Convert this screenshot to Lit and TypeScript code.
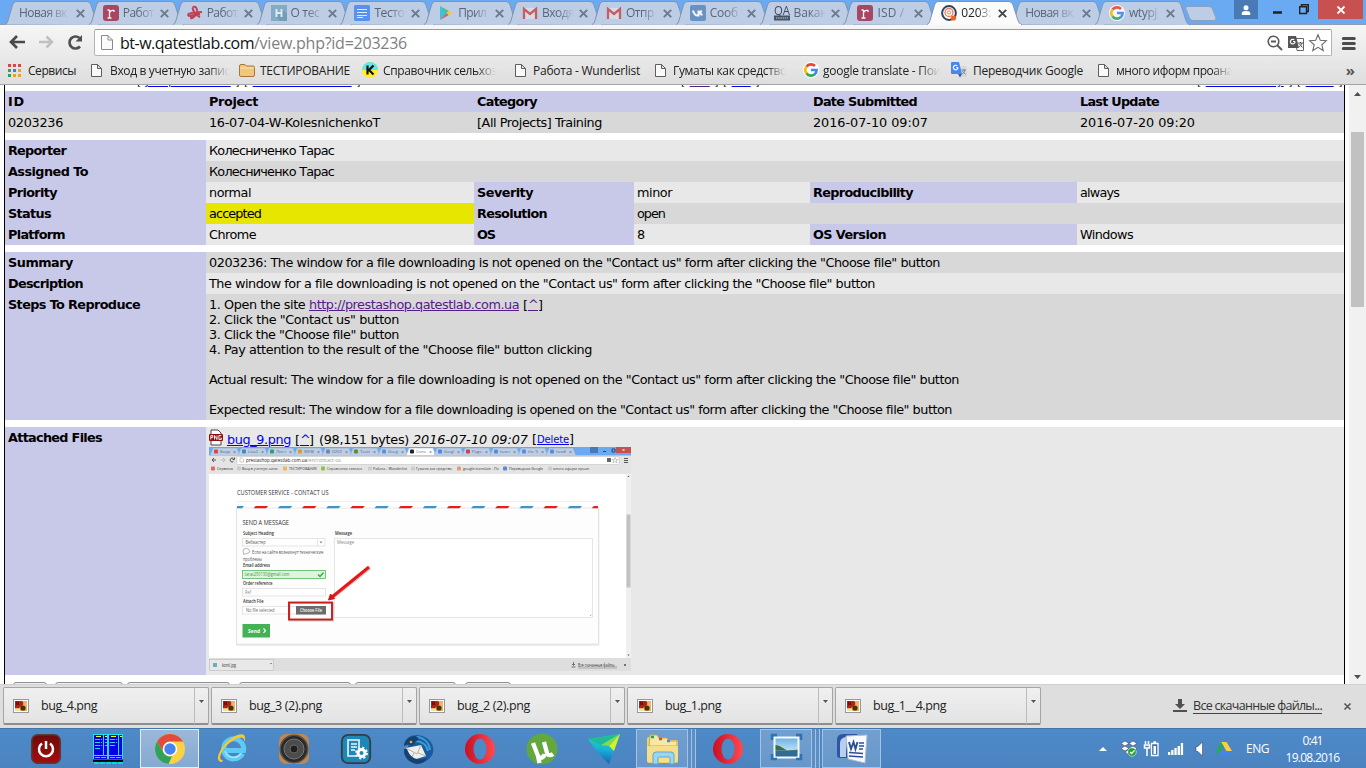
import { LitElement, html, css, svg } from "lit";
import { customElement } from "lit/decorators.js";

// Text whose letter-spacing is adjusted so it takes w pixels.
const fit = (text: string, w: number, cls = "") =>
  html`<span class="fit ${cls}" data-w=${w}>${text}</span>`;
const icon = (w: number, h: number, body: unknown, cls = "") =>
  html`<svg class=${cls} width=${w} height=${h} viewBox="0 0 ${w} ${h}">${body}</svg>`;
const st = (x: number, y: number, w: number, size: number, text: string, fill = "#444", weight = 400) =>
  svg`<text x=${x} y=${y} textLength=${w} lengthAdjust="spacingAndGlyphs" font-size=${size} fill=${fill} font-weight=${weight}>${text}</text>`;

const google = svg`<g fill="none" stroke-width="2.7"><path d="M3.5 4.6A5.6 5.6 0 0 1 12 4" stroke="#ea4335"/><path d="M3.6 4.5a5.6 5.6 0 0 0 0 7" stroke="#fbbc05"/><path d="M3.5 11.4a5.6 5.6 0 0 0 8.2.8" stroke="#34a853"/><path d="M8 8h5.6c0 2-.7 3.4-2 4.4" stroke="#4285f4"/></g>`;
const rIcon = svg`<rect width="16" height="16" rx="3" fill="#a5304a"/><path d="M6.500 13V5M4.500 13h4M4.500 5h2M6.500 8c.3-2 2-3 4.500-2.500v1.500" fill="none" stroke="#fff" stroke-width="1.300"/>`;
const gmail = svg`<path d="M2 3h12v11H2z" fill="#d9dfe9"/><path d="M2 14V4l6 5 6-5v10" fill="none" stroke="#c74b4b" stroke-width="2.300"/>`;
const fav: Record<string, unknown> = {
  r: rIcon,
  gmail,
  google: svg`<circle cx="8" cy="8" r="8" fill="#fff"/>${google}`,
  star: svg`<path d="M1 9.500c1-2 6-2 14-2.500M5.500 2.500c3-2 4.500 0 5 5.500M5.500 2.500C6 6 9 10 13 12M10 8c-2 4-6 6-6 5 0-2 4-4 9-4M1 9.500c0 2 3 1.500 5 .5" fill="none" stroke="#c1293c" stroke-width="2"/>`,
  h: svg`<rect width="16" height="16" fill="#78a7bf"/><path d="M11 4l5 5v7H9l-4-4z" fill="#6794ad"/><path d="M5.500 4v8M10.500 4v8M5 8h6" stroke="#e4eef4" stroke-width="2"/>`,
  docs: svg`<rect width="16" height="16" rx="1.500" fill="#4688f1"/><path d="M3 4.500h10M3 7.500h10M3 10.500h10M3 12.500h6" stroke="#e8f0fe"/>`,
  play: svg`<path d="M2 1l7 7-7 7z" fill="#25c2d8"/><path d="M2 1l9 5-2.500 2.500z" fill="#3dbf7c"/><path d="M2 15l9-5-2.500-2z" fill="#e4495b"/><path d="M11 5.500l4 2.500-4 2.500L8.500 8z" fill="#f4c83a"/>`,
  vk: svg`<rect width="16" height="16" rx="2" fill="#5b88bd"/><path d="M3 5.500c.8 3 2.500 5 4.500 5h1v-5M8.500 8c1.500 0 2.500-1 3-2.500M8.500 8c1.500 0 3 1 3.500 2.500" fill="none" stroke="#fff" stroke-width="2"/>`,
  qa: svg`<rect y="10.500" width="16" height="5" fill="#34404f"/><text x="0" y="9.500" textLength="16" lengthAdjust="spacingAndGlyphs" font-size="12" fill="#2b3644">QA</text><path d="M2 13h12" stroke="#99a" stroke-width="1.500" stroke-dasharray="1.500 .7"/>`,
  mantis: svg`<circle cx="8" cy="8" r="6.900" fill="#fff" stroke="#2c4468" stroke-width="2"/><circle cx="8" cy="7.500" r="4" fill="none" stroke="#f07a4a" stroke-width="1.300"/><circle cx="8" cy="7.500" r="1.600" fill="none" stroke="#f07a4a"/><circle cx="12.500" cy="13" r="2.600" fill="#f4641e"/>`,
};
const tabs: [string, string, number][] = [
  ["", "Новая вк", 48], ["r", "Работ", 31], ["star", "Работ", 31], ["h", "О тес", 29], ["docs", "Тесто", 30],
  ["play", "Прил", 28], ["gmail", "Входя", 32], ["gmail", "Отпр", 28], ["vk", "Сооб", 28], ["qa", "Вакан", 34],
  ["r", "ISD /", 27], ["mantis", "0203:", 30], ["", "Новая вк", 48], ["google", "wtypj", 28],
];
const page = svg`<path d="M.5.500h6l4 4v8H.500zM6.500.500v4h4" fill="#fafafa" stroke="#5e5e5e"/>`;
const bIcons: Record<string, unknown> = {
  apps: icon(13, 13, ["#e0443e", "#e0443e", "#e0443e", "#34a05c", "#3a7ce0", "#f0a020", "#34a05c", "#f0a020", "#f0a020"].map((c, i) => svg`<rect x=${(i % 3) * 5} y=${Math.floor(i / 3) * 5} width="3" height="3" fill=${c}/>`)),
  page: icon(11, 13, page),
  folder: icon(16, 14, svg`<path d="M.5 3q0-1.500 1.500-1.500h4L7.500 3H14q1.500 0 1.500 1.500V12q0 1.500-1.500 1.500H2Q.500 13.500.500 12z" fill="#f2c77c" stroke="#a8763a"/><path d="M1.500 5h13" stroke="#fbe4b8"/>`),
  k: icon(16, 16, svg`<circle cx="8" cy="8" r="8" fill="#ffef2a"/><path d="M0 8a8 8 0 0 1 16 0z" fill="#63e6e6"/><path d="M5.500 3.500v9M11.500 3.500L7 8l4.500 4.500" fill="none" stroke="#111" stroke-width="2.200"/>`),
  google: icon(16, 16, svg`<circle cx="8" cy="8" r="8" fill="#fff"/>${google}`),
  tr: icon(16, 16, svg`<path d="M6 4h9q1 0 1 1v10H9z" fill="#d8d8d8"/><path d="M0 1q0-1 1-1h7l3 12H1q-1 0-1-1z" fill="#4a86ec"/><path d="M7 12h4l-2 3.500z" fill="#2a5cc0"/><path d="M7 5.500H5.300M7 5.500a2.300 2.300 0 1 1-.8-1.700" fill="none" stroke="#fff" stroke-width="1.200"/><path d="M10.500 8H15M12.700 7v1M14 8c-.5 2-2 3.500-3 4M11.500 9l3 3.500" fill="none" stroke="#6a8a90"/>`),
};
// icon, icon slot, label, label width, item width, faded
const marks: [string, number, string, number, number, boolean][] = [
  ["apps", 20, "Сервисы", 48, 83, false], ["page", 19, "Вход в учетную запис", 120, 148, true],
  ["folder", 21, "ТЕСТИРОВАНИЕ", 90, 123, false], ["k", 21, "Справочник сельхоз", 114, 153, true],
  ["page", 18, "Работа - Wunderlist", 107, 140, false], ["page", 18, "Гуматы как средство", 114, 148, true],
  ["google", 20, "google translate - Пои", 118, 148, true], ["tr", 22, "Переводчик Google", 110, 147, false],
  ["page", 18, "много иформ проана", 117, 150, true],
];

const opera = svg`<ellipse cx="15" cy="15" rx="15" ry="15" fill="url(#op)"/><ellipse cx="15" cy="15" rx="6.500" ry="10.500" fill="#4c89c7"/>`;
const apps: { kind: string; body: unknown }[] = [
  { kind: "", body: svg`<rect x=".7" y=".7" width="28.600" height="28.600" rx="6" fill="url(#pw)" stroke="#5b3a3a" stroke-width="1.500"/><path d="M11 9.500a7 7 0 1 0 8 0M15 7v8" fill="none" stroke="#fff" stroke-width="2.500"/>` },
  { kind: "", body: svg`<rect width="30" height="28" fill="#0000e8"/><path d="M.5 0v26M14.500 0v26M15.500 0v26M29.500 0v26M0 .5h30M0 21.500h30M0 25.500h30M10.500 1v21M25.500 1v21" stroke="#19e6f5"/><path d="M3 2.500h5M12 2.500h2M18 2.500h5M27 2.500h2" stroke="#ff0"/><path d="M2 5.500h7M2 8.500h7M2 11.500h7M2 14.500h5M17 5.500h7M17 8.500h7M17 11.500h5M12 5.500h2M12 8.500h2M12 11.500h2M2 23.500h11M17 23.500h11" stroke="#27d8f5" stroke-dasharray="5 1"/><path d="M0 26.500h30" stroke="#000" stroke-width="2"/><path d="M1 29h29" stroke="#00dada" stroke-width="2" stroke-dasharray="5 1"/>` },
  { kind: "active", body: svg`<circle cx="15" cy="15" r="15" fill="#fbd246"/><path d="M2 7.500A15 15 0 0 1 28.100 7.600H15a7.500 7.500 0 0 0-6.500 11z" fill="#df4b3c"/><path d="M2 7.500l6.600 11.300A7.500 7.500 0 0 0 17 22.200L13.500 30A15 15 0 0 1 2 7.500z" fill="#2fa35a"/><circle cx="15" cy="15" r="7.200" fill="#fff"/><circle cx="15" cy="15" r="5.700" fill="#4284f0"/>` },
  { kind: "", body: svg`<path d="M25.500 19.500a10 10 0 1 1 1-3H9" fill="none" stroke="#5ecbf7" stroke-width="5"/><path d="M24 19.500A9 9 0 0 1 8 17" fill="none" stroke="#a7e7fd" stroke-width="1.500"/><path d="M5 28C-2 28 1 18 8 10 16 1 29-4 28 5c0 1-.3 2-.8 3C28-.500 17 4 9 12 3 19 1 27 6 26" fill="#f8c92c"/>` },
  { kind: "", body: svg`<rect width="30" height="30" rx="7" fill="#bd8854"/><circle cx="15" cy="15" r="14.500" fill="#5a5149"/><circle cx="15" cy="15" r="13" fill="#292a2b"/><circle cx="15" cy="15" r="10" fill="#4c4c4c" stroke="#777"/><circle cx="15" cy="15" r="4" fill="#1d1e20" stroke="#666"/>` },
  { kind: "", body: svg`<rect x=".8" y=".8" width="28.400" height="28.400" rx="6.500" fill="#1e87b5" stroke="#323d45" stroke-width="1.800"/><path d="M18 13V6H7v16h8M10 10h6M10 13h6M10 16h4" fill="none" stroke="#e8f8ff" stroke-width="1.600"/><circle cx="20.500" cy="19" r="3.500" fill="none" stroke="#fff" stroke-width="3"/><circle cx="20.500" cy="19" r="5.500" fill="none" stroke="#fff" stroke-width="1.800" stroke-dasharray="2.160 2.160"/>` },
  { kind: "", body: svg`<path d="M8 2c7-3 20 1 22 11 2 9-6 16-15 16C6 29 0 23 1 15c2 2 2 4 3 5 0-6 1-9 4-12z" fill="#195b9e"/><path d="M9 3c10-1 17 4 18 13M12 7c7 0 12 4 13 10" fill="none" stroke="#3d9ad4" stroke-width="2"/><path d="M3 14l15-3 5 11-16 5z" fill="#f1efec"/><path d="M3 14l11 6 4-9M7 27l4-8M23 22l-8-3" fill="none" stroke="#b7b0aa"/><path d="M1 12c0-5 4-10 10-10 3 0 5 2 4 4-2 1-4 3-6 6-3-2-5-1-8 0z" fill="#174173"/><circle cx="8" cy="8" r="1.300" fill="#e9b43c"/><path d="M1 15c0 8 5 14 13 15 5 0 9-3 10-6-9 4-17 0-20-9z" fill="#174173"/>` },
  { kind: "", body: opera },
  { kind: "", body: svg`<circle cx="15" cy="15" r="15.500" fill="#62a83f"/><path d="M6 9l5 13c1.500 3 6 2 6.500-2M17 8l3 11c.8 3 4 2.500 6 1M11 22l1.500 7" fill="none" stroke="#fff" stroke-width="4.300"/>` },
  { kind: "", body: svg`<path d="M-1 5L31 0 20 30q-12-11-21-25z" fill="url(#kb)"/><path d="M-1 5L31 0 12 11z" fill="#17b98c" opacity=".75"/><path d="M31 0L20 12l5 5z" fill="#d3f22a"/><path d="M31 0L12 11l8 1z" fill="#7fdc4a"/>` },
  { kind: "open stack", body: svg`<path d="M0 5q0-2 2-2h8l2 3h17q2 0 2 2v19q0 2-2 2H2q-2 0-2-2z" fill="#eed173"/><path d="M3 1h7l2 3h8l2 3h8v5H2z" fill="#f8e8a6" stroke="#c9a94d"/><path d="M4 3h3" stroke="#23a34c" stroke-width="2.500"/><path d="M12 5h3" stroke="#d34a34" stroke-width="2.500"/><path d="M20 7h3" stroke="#3d91d7" stroke-width="2.500"/><path d="M0 12h31v14q0 2-2 2H2q-2 0-2-2z" fill="#f5de8c"/><path d="M6 30V21q0-3 3-3h15q3 0 3 3v9h-4v-6q0-1-1-1H12q-1 0-1 1v6z" fill="#9bd5f0" stroke="#5fa9d0"/>` },
  { kind: "", body: opera },
  { kind: "open stack", body: svg`<rect x="2.500" y="2.500" width="26" height="22" fill="#f6f8fa"/><rect x="4.500" y="4.500" width="22" height="18" fill="url(#sky)"/><path d="M4.500 11c4 0 8 4 12 5.500H4.500z" fill="#3c6b4c"/><path d="M17 16.500l9.500-1v2h-10z" fill="#5c8a6a"/><path d="M4.500 16.500h22v6h-22z" fill="#2f6c94"/><path d="M1 6V1h5M25 1h5v5M1 20v5h5M25 25h5v-5" fill="none" stroke="#2c74b5" stroke-width="2.500"/>` },
  { kind: "open", body: svg`<path d="M0 6q0-6 6-6h14v24H3q-3 0-3-3z" fill="#2d57a5"/><path d="M3 9q0-5 6-6v20H3z" fill="#b9cdee"/><path d="M9 2l21-1-2 28-17-4z" fill="#f8fafd" stroke="#a9bad4"/><path d="M12 8l2 7 2.500-7 2 7 2-7" fill="none" stroke="#2b4f98" stroke-width="1.900"/><path d="M22 9h5M22 12h5M22 15h4M12 18.500l14 1M12 22l14 1" fill="none" stroke="#2b4f98" stroke-width="1.600"/>` },
];

const stripes = Array.from({ length: 16 }, (_, i) => {
  const x = 229.500 + i * 24.150;
  return svg`<path d="M${x + 2} 506h12.500l-2 2.200h-12.500z" fill=${i % 2 ? "#e0201d" : "#3e93c8"}/>`;
});
const names = ["Входя", "Lisa2", "Лист", "WEBI", "0202", "Testi", "Goog", "Соне", "Googl", "Page", "how t", "the 'S", "handl"];
const cols = ["#d34a45", "#3a8bc8", "#27a566", "#dc9a2d", "#7489a5", "#638d25", "#5b8eed", "#222", "#4a8ae4", "#c44", "#5a8ae9", "#5a8ae9", "#5a8ae9"];
const thumb = html`<svg class="thumb" width="422" height="224" viewBox="209 447 422 224">
  <rect x="209" y="447" width="422" height="224" fill="#fff"/>
  <rect x="209" y="447" width="422" height="9" fill="#69aaf3"/>
  ${names.map((n, i) => svg`<path d="M${210 + i * 28} 455.500l3-7.500h24l3 7.500z" fill=${i === 7 ? "#fff" : "#bccee6"} stroke="#8099b8" stroke-width=".4"/><rect x=${214 + i * 28} y="449.500" width="4" height="4" rx="1" fill=${cols[i]}/>${st(220 + i * 28, 453.300, 10, 4, n, "#667")}${st(233 + i * 28, 453.500, 3, 5, "×", "#555")}`)}
  <rect x="590" y="447" width="8" height="6" fill="#4a78b4"/><path d="M603 451.500h3M612 449h3v3h-3z" stroke="#345" fill="none"/><rect x="616" y="447" width="15" height="6" fill="#c75050"/><path d="M622.500 449l2 2m0-2l-2 2" stroke="#fff" stroke-width=".7"/>
  <rect x="209" y="455.500" width="422" height="18.500" fill="#e4e4e4"/><rect x="237" y="456.500" width="382" height="8" rx=".7" fill="#fff" stroke="#bbb" stroke-width=".5"/>
  <path d="M216 460h-4l2-2m-2 2l2 2" stroke="#555" fill="none"/><path d="M221 460h4l-2-2m2 2l-2 2" stroke="#bbb" fill="none"/><path d="M233.500 461.500a2 2 0 1 1 0-3M234.500 457.500v2h-2" stroke="#555" fill="none"/><path d="M240 458h2.500l1 1v3h-3.500z" fill="none" stroke="#999" stroke-width=".5"/>
  ${st(246, 462, 61, 5.700, "prestashop.qatestlab.com.ua", "#222")}${st(307, 462, 34, 5.700, "/en/contact-us", "#999")}
  <path d="M607 458h4v4h-4z" fill="#666"/><path d="M615 457.500l.8 2h2l-1.600 1.200.600 2-1.800-1.200-1.800 1.200.600-2-1.600-1.200h2z" fill="none" stroke="#777" stroke-width=".4"/><path d="M624 458.500h4M624 460.500h4M624 462.500h4" stroke="#555"/>
  ${[[211, 217, 16, "Сервисы"], [237, 242, 36, "Вход в учетную запис"], [283, 289, 28, "ТЕСТИРОВАНИЕ"], [321, 327, 35, "Справочник сельхоз"], [368, 373, 34, "Работа - Wunderlist"], [411, 416, 36, "Гуматы как средство"], [457, 463, 36, "google translate - По"], [503, 509, 34, "Переводчик Google"], [548, 553, 36, "много иформ проан"]].map(([a, b, w, t], i) => svg`<rect x=${a} y="466.500" width="4" height="4" rx="1" fill=${["#d66", "#ccc", "#eeb955", "#8bc63c", "#ccc", "#ccc", "#e59a80", "#5589dd", "#ccc"][i]}/>${st(b as number, 470.300, w as number, 4.200, t as string, "#333")}`)}
  <rect x="626" y="474" width="5" height="184" fill="#f0f0f0"/><rect x="626.500" y="514.500" width="4" height="73" fill="#c1c1c1"/><path d="M627.500 477l1-1.500 1 1.500zM627.500 654.500l1 1.500 1-1.500z" fill="#555"/>
  ${st(237, 494.800, 91.500, 6.300, "CUSTOMER SERVICE - CONTACT US", "#333")}
  <path d="M237 501.500h361" stroke="#e5e5e5" stroke-width=".6"/>
  <rect x="236" y="509" width="363.500" height="137" fill="#ccc" opacity=".35"/><rect x="236.500" y="508" width="362" height="136" fill="#fdfdfd" stroke="#dcdcdc" stroke-width=".7"/>
  <g clip-path="url(#card)">${stripes}</g>
  ${st(242.500, 525, 46.500, 6.300, "SEND A MESSAGE", "#333")}
  ${st(243, 535, 31, 4.500, "Subject Heading", "#333", 600)}${st(335, 535, 17, 4.500, "Message", "#333", 600)}
  <g fill="#fff" stroke="#dadada" stroke-width=".7"><rect x="242.500" y="538.500" width="82.500" height="7.500"/><path d="M317.500 538.500v7.500"/><rect x="334.500" y="538.500" width="258" height="79"/><rect x="242.500" y="588.500" width="83" height="7.500"/><rect x="242.500" y="606.500" width="83" height="7.500"/></g>
  <path d="M319.500 541.500h3l-1.500 2z" fill="#888"/><path d="M590 616l1.500-1.500" stroke="#aaa"/>
  ${st(245.500, 544, 20, 4.500, "Вебмастер", "#555")}${st(337, 544, 17, 4.500, "Message", "#888")}
  <path d="M243 551q0-2.500 3.300-2.500t3.300 2.500-3 2.500l-3 1v-1.600z" fill="none" stroke="#888" stroke-width=".6"/>
  ${st(252, 553.800, 71.500, 4.600, "Если на сайте возникнут технические", "#555")}${st(243, 560.500, 19, 4.600, "проблемы", "#555")}
  ${st(243, 566.800, 27, 4.500, "Email address", "#333", 600)}
  <rect x="242.500" y="570.500" width="83" height="8" fill="#dcf5dc" stroke="#55b862" stroke-width=".8"/>${st(244.500, 576, 45, 4.500, "taras250130@gmail.com", "#3c9b49")}<path d="M318 574.500l2 2 3.500-4" stroke="#39a348" fill="none" stroke-width="1.300"/>
  ${st(243, 584.800, 29.500, 4.500, "Order reference", "#333", 600)}${st(245, 593.800, 6, 4.400, "Ref", "#888")}
  ${st(243, 602.800, 20.500, 4.500, "Attach File", "#333", 600)}${st(246, 611.800, 28.500, 4.400, "No file selected", "#666")}
  <rect x="296" y="606" width="30" height="8.500" fill="#6b6b6b"/>${st(300, 611.900, 22, 4.500, "Choose File", "#fff", 600)}
  <rect x="289.500" y="603" width="43.500" height="17.500" fill="none" stroke="#999" stroke-width="1.800" opacity=".5"/><rect x="289" y="602.500" width="43" height="17" fill="none" stroke="#cd1a1a" stroke-width="1.900"/>
  <path d="M370 568l-39 31" stroke="#999" stroke-width="3" opacity=".5"/><path d="M369 567l-37 30" stroke="#ec1414" stroke-width="3"/><path d="M328.500 600l2-6 4 4.500z" fill="#d71414" stroke="#d71414"/>
  <rect x="242.500" y="624" width="27.500" height="13.500" fill="#43b154"/>${st(248, 632.700, 12, 5.500, "Send", "#fff", 700)}<path d="M263.500 628.500l2 2.200-2 2.200" stroke="#fff" fill="none" stroke-width="1.200"/>
  <rect x="209" y="658" width="422" height="13" fill="#dedede"/><rect x="209.500" y="659.500" width="64" height="11" fill="#e8e8e8" stroke="#bbb" stroke-width=".6"/><path d="M270 663h2l-1 1.200z" fill="#555"/><rect x="213" y="663" width="4" height="4" fill="#6bacc9"/>
  ${st(222, 667, 14, 4.500, "kontl.jpg", "#333")}<path d="M573.500 662v3m-1.500-1l1.500 1.500 1.500-1.500M571.500 667h4" stroke="#555" fill="none" stroke-width=".8"/>${st(578, 667, 39, 4.700, "Все скачанные файлы...", "#333")}<path d="M578 668h39" stroke="#555" stroke-width=".4"/><path d="M624 664l2 2m0-2l-2 2" stroke="#555" stroke-width=".8"/>
  <defs><clipPath id="card"><rect x="237" y="500" width="361" height="20"/></clipPath></defs>
</svg>`;

@customElement("app-root")
export class AppRoot extends LitElement {
  static styles = css`
    :host { display: flex; flex-direction: column; width: 1366px; height: 768px; overflow: hidden; background: #fff; font: 12px "Open Sans", "Noto Sans", sans-serif; color: #222; }
    * { box-sizing: border-box; }
    svg { display: block; flex: none; overflow: visible; }
    .fit { display: inline-block; white-space: pre; }
    .strip { height: 25px; flex: none; display: flex; background: #69aaf3; padding-left: 5px; border-bottom: 1px solid #8e9db0; }
    .tab { position: relative; width: 83.85px; height: 25px; flex: none; display: flex; align-items: center; padding: 1px 0 0 14px; color: #5b6674; }
    .tab.on { color: #222; z-index: 2; }
    .shape { position: absolute; left: 0; top: 0; }
    .tab .ic { width: 20px; position: relative; }
    .ic.dim { opacity: .85; }
    .lab { position: relative; flex: none; overflow: hidden; width: 32px; height: 18px; line-height: 18px; -webkit-mask-image: linear-gradient(90deg, #000 50%, transparent); mask-image: linear-gradient(90deg, #000 50%, transparent); }
    .lab.wide { width: 52px; }
    .x { position: relative; margin-left: 5px; }
    .new { margin: 6px 0 0 6px; }
    .win { display: flex; margin-left: auto; align-items: flex-start; padding-right: 3px; }
    .user { width: 24px; height: 19px; background: #4a7ab6; display: grid; place-items: center; }
    .min { margin: 11px 0 0 15px; } .res { margin: 4px 0 0 17px; }
    .close { width: 45px; height: 19px; margin-left: 9px; background: #c75050; display: grid; place-items: center; }
    .bar { height: 60px; flex: none; background: linear-gradient(#f6f6f6, #dedede); border-bottom: 1px solid #a4a4a4; }
    .nav { height: 34px; padding: 4px 10px 0 9px; display: flex; }
    .nav > svg { margin-top: 5px; }
    .fwd { margin-left: 13px; } .rel { margin-left: 13px; }
    .omni { margin-left: 10px; width: 1238px; height: 27px; border: 1px solid #b3b3b3; border-top-color: #9a9a9a; border-radius: 2px; background: #fff; display: flex; align-items: center; padding: 0 4px 0 6px; font-size: 16px; }
    .omni .u { margin-left: 7px; color: #111; } .grey { color: #808080; }
    .tools { margin-left: auto; display: flex; gap: 5px; align-items: center; }
    .nav > .menu { margin: 8px 0 0 10px; }
    .marks { display: flex; height: 22px; align-items: center; padding: 0 11px 0 8px; }
    .mark { display: flex; align-items: center; flex: none; height: 20px; }
    .slot { flex: none; }
    .fade { -webkit-mask-image: linear-gradient(90deg, #000 82%, transparent 99%); mask-image: linear-gradient(90deg, #000 82%, transparent 99%); }
    .more { margin-left: auto; font-size: 15px; line-height: 16px; font-weight: 700; color: #555; }
    .view { height: 599px; flex: none; display: flex; overflow: hidden; background: #fff; }
    .doc { margin-left: 4px; width: 1341px; border: solid #000; border-width: 0 1px; font: 12.8px/15px "DejaVu Sans", sans-serif; color: #000; overflow: hidden; }
    .cut { height: 6px; overflow: hidden; display: flex; font-size: 10.8px; line-height: 13px; padding-left: 132px; white-space: nowrap; }
    .cut > div { margin-top: -10px; flex: none; height: 13px; display: flex; gap: 4.5px; }
    .c1 { width: 544px; } .c2 { width: 516px; }
    a { color: #00e; } a.v { color: #551a8b; }
    a .fit { text-decoration: underline; }
    .grid { display: grid; grid-template-columns: 201px 268px 160px 176px 267px 267px; grid-auto-rows: minmax(21px, auto); margin-bottom: 7px; }
    .grid > div { padding: 3px; background: #e8e8e8; white-space: nowrap; }
    .grid > .h { background: #c8c8e8; font-weight: 700; }
    .grid > .d { background: #d8d8d8; } .grid > .acc { background: #e6e600; }
    .grid > .s2 { grid-column: span 2; } .grid > .s3 { grid-column: span 3; } .grid > .s5 { grid-column: span 5; }
    .steps { height: 126px; } .line { height: 15px; }
    .grid > .att { height: 248px; padding-top: 2px; }
    .file { height: 18px; padding-top: 2px; display: flex; align-items: center; gap: 4px; }
    .file > svg { margin-top: -3px; }
    .file .small { font-size: 10px; } .file i { font-style: italic; }
    .thumb { font-family: "Open Sans", sans-serif; }
    .btns { display: flex; padding-left: 8px; }
    .btns span { height: 12px; border: 1px solid #8f8f8f; border-radius: 3px; background: #eee; flex: none; }
    .scroll { margin-left: 4px; width: 17px; background: #f1f1f1; display: flex; flex-direction: column; align-items: center; padding: 7px 0 5px; }
    .thumbbar { width: 13px; height: 175px; background: #c1c1c1; margin: 36px 0 auto; }
    .shelf { height: 44px; flex: none; background: #dedede; border-top: 1px solid #d0d0d0; display: flex; padding: 2px 15px 0 3px; gap: 2px; font-size: 12.5px; }
    .dl { width: 206px; height: 38px; display: flex; align-items: center; border: 1px solid #a5a5a5; border-bottom: 2px solid #8e8e8e; border-radius: 2px; background: linear-gradient(#f0f0f0, #e3e3e3); padding-left: 9px; color: #222; }
    .dl .nm { margin-left: 12px; }
    .dd { margin-left: auto; width: 14px; height: 36px; border-left: 1px solid #bbb; padding: 12px 0 0 4px; }
    .all { margin-left: auto; display: flex; align-items: center; height: 38px; color: #333; }
    .all .fit { margin: 0 22px 0 6px; border-bottom: 1px solid #444; line-height: 14px; }
    .task { height: 40px; flex: none; display: flex; background: linear-gradient(#4d8ac8, #4b83c0); border-top: 1px solid #4476aa; padding-left: 15px; }
    .app { width: 62px; height: 39px; display: grid; place-items: center; flex: none; }
    .box { width: 59px; height: 39px; display: grid; place-items: center; margin-left: -1px; }
    .box.active { background: linear-gradient(#9bb8da, #84a9d2); border: 1px solid #e3edf7; }
    .box.open { background: linear-gradient(#719fcf, #6797ca); border: 1px solid #a4c2e2; }
    .box.stack { margin-left: 0; width: 52px; margin-right: 9px; box-shadow: 3px 0 0 #5b8fc8, 4px 0 0 #a4c2e2, 7px 0 0 #5b8fc8, 8px 0 0 #a4c2e2; }
    .tray { margin-left: auto; display: flex; align-items: center; color: #fff; padding-right: 26px; }
    .clock { display: flex; flex-direction: column; align-items: center; line-height: 17px; margin-left: 16px; width: 55px; padding-top: 1px; }
    .arrow { margin-right: 14px; } .drop { margin-right: 7px; } .sig { margin-left: 9px; } .vol { margin-left: 13px; } .drive { margin-left: 13px; margin-right: 14px; }
  `;

  private adjust() {
    this.renderRoot.querySelectorAll<HTMLElement>(".fit").forEach((el) => {
      const n = (el.textContent || "").length;
      el.style.letterSpacing = "0px";
      const w = el.getBoundingClientRect().width;
      el.style.letterSpacing = `${(Number(el.dataset.w) - w) / n}px`;
    });
  }
  firstUpdated() {
    this.adjust();
    document.fonts.ready.then(() => this.adjust());
  }

  private c(cls: string, text: string, w: number) {
    return html`<div class=${cls}>${text ? fit(text, w) : ""}</div>`;
  }

  render() {
    const x = (c: string) => icon(9, 9, svg`<path d="M.8.8l7.400 7.400m0-7.400L.8 8.200" stroke=${c} stroke-width="1.900"/>`, "x");
    return html`
      <div class="strip">
        ${tabs.map(([f, t, w], i) => html`<div class="tab ${i === 11 ? "on" : ""}">
          ${icon(96, 25, svg`<path d="M0 24.500C2 23.500 2 23 3 20.500L7.500 5Q8.500 1.500 11 1.500H82Q85 1.500 86 5l5 15.500q1 3.500 4 4.500" fill=${i === 11 ? "#fbfbfb" : "#bccde5"} stroke="#7f94b3"/>${i === 11 ? svg`<path d="M1 24.700h93" stroke="#fafafa" stroke-width="1.500"/>` : ""}`, "shape")}
          ${f ? html`<div class="ic ${i === 11 ? "" : "dim"}">${icon(16, 16, fav[f])}</div>` : ""}
          <div class="lab ${f ? "" : "wide"}">${fit(t, w)}</div>${x(i === 11 ? "#444" : "#6c7989")}</div>`)}
        ${icon(32, 15, svg`<path d="M2 .5h22q2.500 0 3.500 2.500l3.500 9q.5 2.500-2 2.500H8Q5.500 14.500 4.500 12L1 3Q.3.500 2 .500z" fill="#bccde5" stroke="#8ba0be"/>`, "new")}
        <div class="win">
          <div class="user">${icon(10, 10, svg`<circle cx="5" cy="2.700" r="2.500" fill="#fff"/><path d="M.8 10V8q0-2 4.200-2t4.200 2v2z" fill="#fff"/>`)}</div>
          ${icon(9, 3, svg`<path d="M0 1.500h9" stroke="#222" stroke-width="2.500"/>`, "min")}
          ${icon(10, 10, svg`<path d="M.7 2.700h6.800v6.800H.700zM2.500 2V.700h6.800v6.800H8" fill="none" stroke="#222" stroke-width="1.400"/>`, "res")}
          <div class="close">${icon(8, 8, svg`<path d="M.5.500l7 7m0-7l-7 7" stroke="#fff" stroke-width="1.800"/>`)}</div>
        </div>
      </div>
      <div class="bar">
        <div class="nav">
          ${icon(17, 16, svg`<path d="M16 8H2M8 2L2 8l6 6" fill="none" stroke="#4a4a4a" stroke-width="2.700"/>`)}
          ${icon(15, 16, svg`<path d="M0 8h13M7.500 2.500L13 8l-5.500 5.500" fill="none" stroke="#c0c0c0" stroke-width="2.500"/>`, "fwd")}
          ${icon(17, 16, svg`<path d="M13 12.500A6 6 0 1 1 12.500 4" fill="none" stroke="#505050" stroke-width="2.700"/><path d="M15 1v6.500H8.500z" fill="#505050"/>`, "rel")}
          <div class="omni">
            ${icon(12, 15, svg`<path d="M.5.500h6.500l4.500 4.500v9.500H.500zM7 .500V5h4.500" fill="#fafafa" stroke="#8a8a8a"/>`)}
            ${fit("bt-w.qatestlab.com", 134, "u")}${fit("/view.php?id=203236", 153, "grey")}
            <div class="tools">
              ${icon(16, 16, svg`<circle cx="6.500" cy="6.500" r="5.300" fill="none" stroke="#5a5a5a" stroke-width="1.600"/><path d="M4 6.500h5M10.500 10.500l4.500 4.500" stroke="#5a5a5a" stroke-width="1.900"/>`)}
              ${icon(16, 16, svg`<path d="M7 3.500h8.500v12H9z" fill="#fff" stroke="#666"/><path d="M0 1h8l3 12H0z" fill="#555"/><path d="M7 6.500H5M7 6.500a2.300 2.300 0 1 1-.8-1.600" fill="none" stroke="#fff" stroke-width="1.200"/><path d="M10 8h5M12.500 7v1M14 8c-.5 2-2 3.500-3 4M11.500 9l3 3.500" fill="none" stroke="#555"/>`)}
              ${icon(18, 17, svg`<path d="M9 .8l2.300 5.500 6 .5-4.500 4 1.400 5.700L9 13.300l-5.200 3.200 1.400-5.700-4.500-4 6-.5z" fill="#fff" stroke="#6a6a6a" stroke-width="1.100"/>`)}
            </div>
          </div>
          ${icon(13, 13, svg`<path d="M1.300 1.500h11M1.300 6.500h11M1.300 11.500h11" stroke="#4c4c4c" stroke-width="3" stroke-linecap="round"/>`, "menu")}
        </div>
        <div class="marks">
          ${marks.map(([k, s, t, w, iw, fd]) => html`<div class="mark" style="width:${iw}px"><div class="slot" style="width:${s}px">${bIcons[k]}</div>${fit(t, w, fd ? "fade" : "")}</div>`)}
          <span class="more">»</span>
        </div>
      </div>
      <div class="view">
        <div class="doc">
          <div class="cut">
            <div class="c1"><span>[</span><a>${fit("Jump to Notes", 85)}</a><span>]</span><span>[</span><a>${fit("Send a reminder", 99)}</a><span>]</span></div>
            <div class="c2"><span>[</span><a class="v">${fit("<<", 20)}</a><span>]</span><span>[</span><a>${fit(">>", 19)}</a><span>]</span></div>
            <div><span>[</span><a>${fit("Issue History", 78)}</a><span>]</span><span>[</span><a>${fit("Print", 28)}</a><span>]</span></div>
          </div>
          <div class="grid">
            ${this.c("h", "ID", 17)}${this.c("h", "Project", 49)}${this.c("h s2", "Category", 60)}${this.c("h", "Date Submitted", 104)}${this.c("h", "Last Update", 79)}
            ${this.c("d", "0203236", 55)}${this.c("d", "16-07-04-W-KolesnichenkoT", 171)}${this.c("d s2", "[All Projects] Training", 125)}${this.c("d", "2016-07-10 09:07", 115)}${this.c("d", "2016-07-20 09:20", 115)}
          </div>
          <div class="grid">
            ${this.c("h", "Reporter", 58)}${this.c("s5", "Колесниченко Тарас", 125)}
            ${this.c("h", "Assigned To", 80)}${this.c("d s5", "Колесниченко Тарас", 125)}
            ${this.c("h", "Priority", 49)}${this.c("", "normal", 42)}${this.c("h", "Severity", 56)}${this.c("", "minor", 35)}${this.c("h", "Reproducibility", 100)}${this.c("", "always", 39)}
            ${this.c("h", "Status", 43)}${this.c("acc", "accepted", 52)}${this.c("h", "Resolution", 70)}${this.c("d s3", "open", 28)}
            ${this.c("h", "Platform", 57)}${this.c("", "Chrome", 47)}${this.c("h", "OS", 18)}${this.c("", "8", 8)}${this.c("h", "OS Version", 73)}${this.c("", "Windows", 53)}
          </div>
          <div class="grid">
            ${this.c("h", "Summary", 65)}${this.c("d s5", '0203236: The window for a file downloading is not opened on the "Contact us" form after clicking the "Choose file" button', 731)}
            ${this.c("h", "Description", 75)}${this.c("s5", 'The window for a file downloading is not opened on the "Contact us" form after clicking the "Choose file" button', 666)}
            ${this.c("h", "Steps To Reproduce", 132)}
            <div class="d s5 steps">
              <div class="line">${fit("1. Open the site ", 100)}<a class="v">${fit("http://prestashop.qatestlab.com.ua", 210)}</a>${fit(" [", 9)}<a class="v">${fit("^", 10)}</a>${fit("]", 6)}</div>
              <div class="line">${fit('2. Click the "Contact us" button', 190)}</div>
              <div class="line">${fit('3. Click the "Choose file" button', 190)}</div>
              <div class="line">${fit('4. Pay attention to the result of the "Choose file" button clicking', 383)}</div>
              <div class="line"></div>
              <div class="line">${fit('Actual result: The window for a file downloading is not opened on the "Contact us" form after clicking the "Choose file" button', 750)}</div>
              <div class="line"></div>
              <div class="line">${fit('Expected result: The window for a file downloading is opened on the "Contact us" form after clicking the "Choose file" button', 743)}</div>
            </div>
          </div>
          <div class="grid">
            ${this.c("h", "Attached Files", 94)}
            <div class="s5 att">
              <div class="file">${icon(14, 15, svg`<path d="M2 0h7l3 3v12H2z" fill="#fff" stroke="#444"/><rect y="4" width="14" height="7" rx="1" fill="#8b1212"/><path d="M1.800 9.500v-4h2v2h-2M5.500 9.500v-4l2.500 4v-4M12.300 5.500h-2.400v4h2.400V8h-1" fill="none" stroke="#fff" stroke-width=".9"/>`)}
                <a>${fit("bug_9.png", 64)}</a><span>${fit("[", 5)}<a>${fit("^", 9)}</a>${fit("]", 6)}</span>${fit("(98,151 bytes)", 90)}<i>${fit("2016-07-10 09:07", 115)}</i><span>${fit("[", 5)}<a class="small">${fit("Delete", 32)}</a>${fit("]", 5)}</span></div>
              ${thumb}
            </div>
          </div>
          <div class="btns">${[[34, 8], [68, 4], [103, 9], [112, 4], [101, 9], [46, 0]].map(([w, g]) => html`<span style="width:${w}px;margin-right:${g}px"></span>`)}</div>
        </div>
        <div class="scroll">
          ${icon(7, 4, svg`<path d="M0 4l3.500-4L7 4z" fill="#505050"/>`)}
          <div class="thumbbar"></div>
          ${icon(7, 4, svg`<path d="M0 0l3.500 4L7 0z" fill="#505050"/>`)}
        </div>
      </div>
      <div class="shelf">
        ${([["bug_4.png", 56], ["bug_3 (2).png", 73], ["bug_2 (2).png", 73], ["bug_1.png", 56], ["bug_1__4.png", 73]] as [string, number][]).map(([t, w]) => html`<div class="dl">
          ${icon(16, 14, svg`<rect x=".5" y=".5" width="15" height="13" fill="#fff" stroke="#999"/><rect x="2" y="2" width="12" height="10" fill="#e8b85a"/><path d="M2 2h6q3 0 2 4L6 9H2z" fill="#b51f15"/><path d="M3 3h3v3H3z" fill="#6e120c"/><circle cx="10" cy="9" r="2.600" fill="#4b2e10"/><path d="M2 10h5v2H2z" fill="#e7e2b5"/>`)}
          ${fit(t, w, "nm")}<div class="dd">${icon(5, 3, svg`<path d="M0 0h5L2.500 3z" fill="#555"/>`)}</div></div>`)}
        <div class="all">
          ${icon(14, 14, svg`<path d="M5 0h4v5h3L7 10 2 5h3z" fill="#505050"/><path d="M0 12h14" stroke="#505050" stroke-width="2"/>`)}
          ${fit("Все скачанные файлы...", 129)}
          ${icon(7, 7, svg`<path d="M.5.500l6 6m0-6l-6 6" stroke="#555" stroke-width="1.600"/>`)}
        </div>
      </div>
      <div class="task">
        <svg width="0" height="0"><defs><linearGradient id="op" x2="1"><stop offset="0" stop-color="#c90f25"/><stop offset="1" stop-color="#ff4a50"/></linearGradient><linearGradient id="pw" x2="0" y2="1"><stop offset="0" stop-color="#6d0a0a"/><stop offset="1" stop-color="#a80c0c"/></linearGradient><linearGradient id="kb" x1=".6" y1="0" x2=".5" y2="1"><stop offset="0" stop-color="#3ad0b0"/><stop offset=".5" stop-color="#16b5d8"/><stop offset="1" stop-color="#1a5fb8"/></linearGradient><linearGradient id="sky" x2="0" y2="1"><stop offset="0" stop-color="#6fb4e6"/><stop offset="1" stop-color="#e8f4fb"/></linearGradient></defs></svg>
        ${apps.map((a) => html`<div class="app"><div class="box ${a.kind}">${icon(30, 30, a.body)}</div></div>`)}
        <div class="tray">
          ${icon(8, 4, svg`<path d="M0 4l4-4 4 4z" fill="#fff"/>`, "arrow")}
          ${icon(16, 15, svg`<path d="M4 0l4 2.500L4 5 0 2.500zM12 0l4 2.500L12 5 8 2.500zM4 5l4 2.500L4 10 0 7.500zM12 5l4 2.500-4 2.500-4-2.500zM8 8.500l4 2.500-4 3-4-3z" fill="#fff" stroke="#335" stroke-width=".5"/><circle cx="11" cy="11" r="4.300" fill="#22a33a" stroke="#fff" stroke-width=".5"/><path d="M9 11l1.500 1.500 3-3" fill="none" stroke="#fff" stroke-width="1.300"/>`, "drop")}
          ${icon(15, 15, svg`<path d="M1.500 0v3M4.500 0v3M.500 4h5v3H.500zM3 7v8" fill="none" stroke="#fff" stroke-width="1.500"/><path d="M7.500 2.500H14V14.500H7.500zM9.500 1H12" fill="#416fa3" stroke="#fff" stroke-width="1.300"/><path d="M9.500 5H12v8H9.500z" fill="#fff"/>`)}
          ${icon(15, 12, svg`<path d="M0 9h2.300v3H0zM3.200 7h2.300v5H3.200zM6.400 5h2.300v7H6.400zM9.600 3h2.300v9H9.600zM12.800 0h2.300v12h-2.300z" fill="#fff"/>`, "sig")}
          ${icon(7, 14, svg`<path d="M0 4.500h2L6.500 0v14L2 9.500H0z" fill="#fff" stroke="#334" stroke-width=".5"/>`, "vol")}
          ${icon(16, 14, svg`<path d="M5 0h5.500l5.500 9h-5.500z" fill="#fbd03b"/><path d="M5 0l2.800 4.500L2.700 13 0 9z" fill="#2ca464"/><path d="M5 9h11l-2.800 4.500H2.500z" fill="#4284f0"/>`, "drive")}
          ${fit("ENG", 23)}
          <div class="clock">${fit("0:41", 20)}${fit("19.08.2016", 54)}</div>
        </div>
      </div>`;
  }
}
